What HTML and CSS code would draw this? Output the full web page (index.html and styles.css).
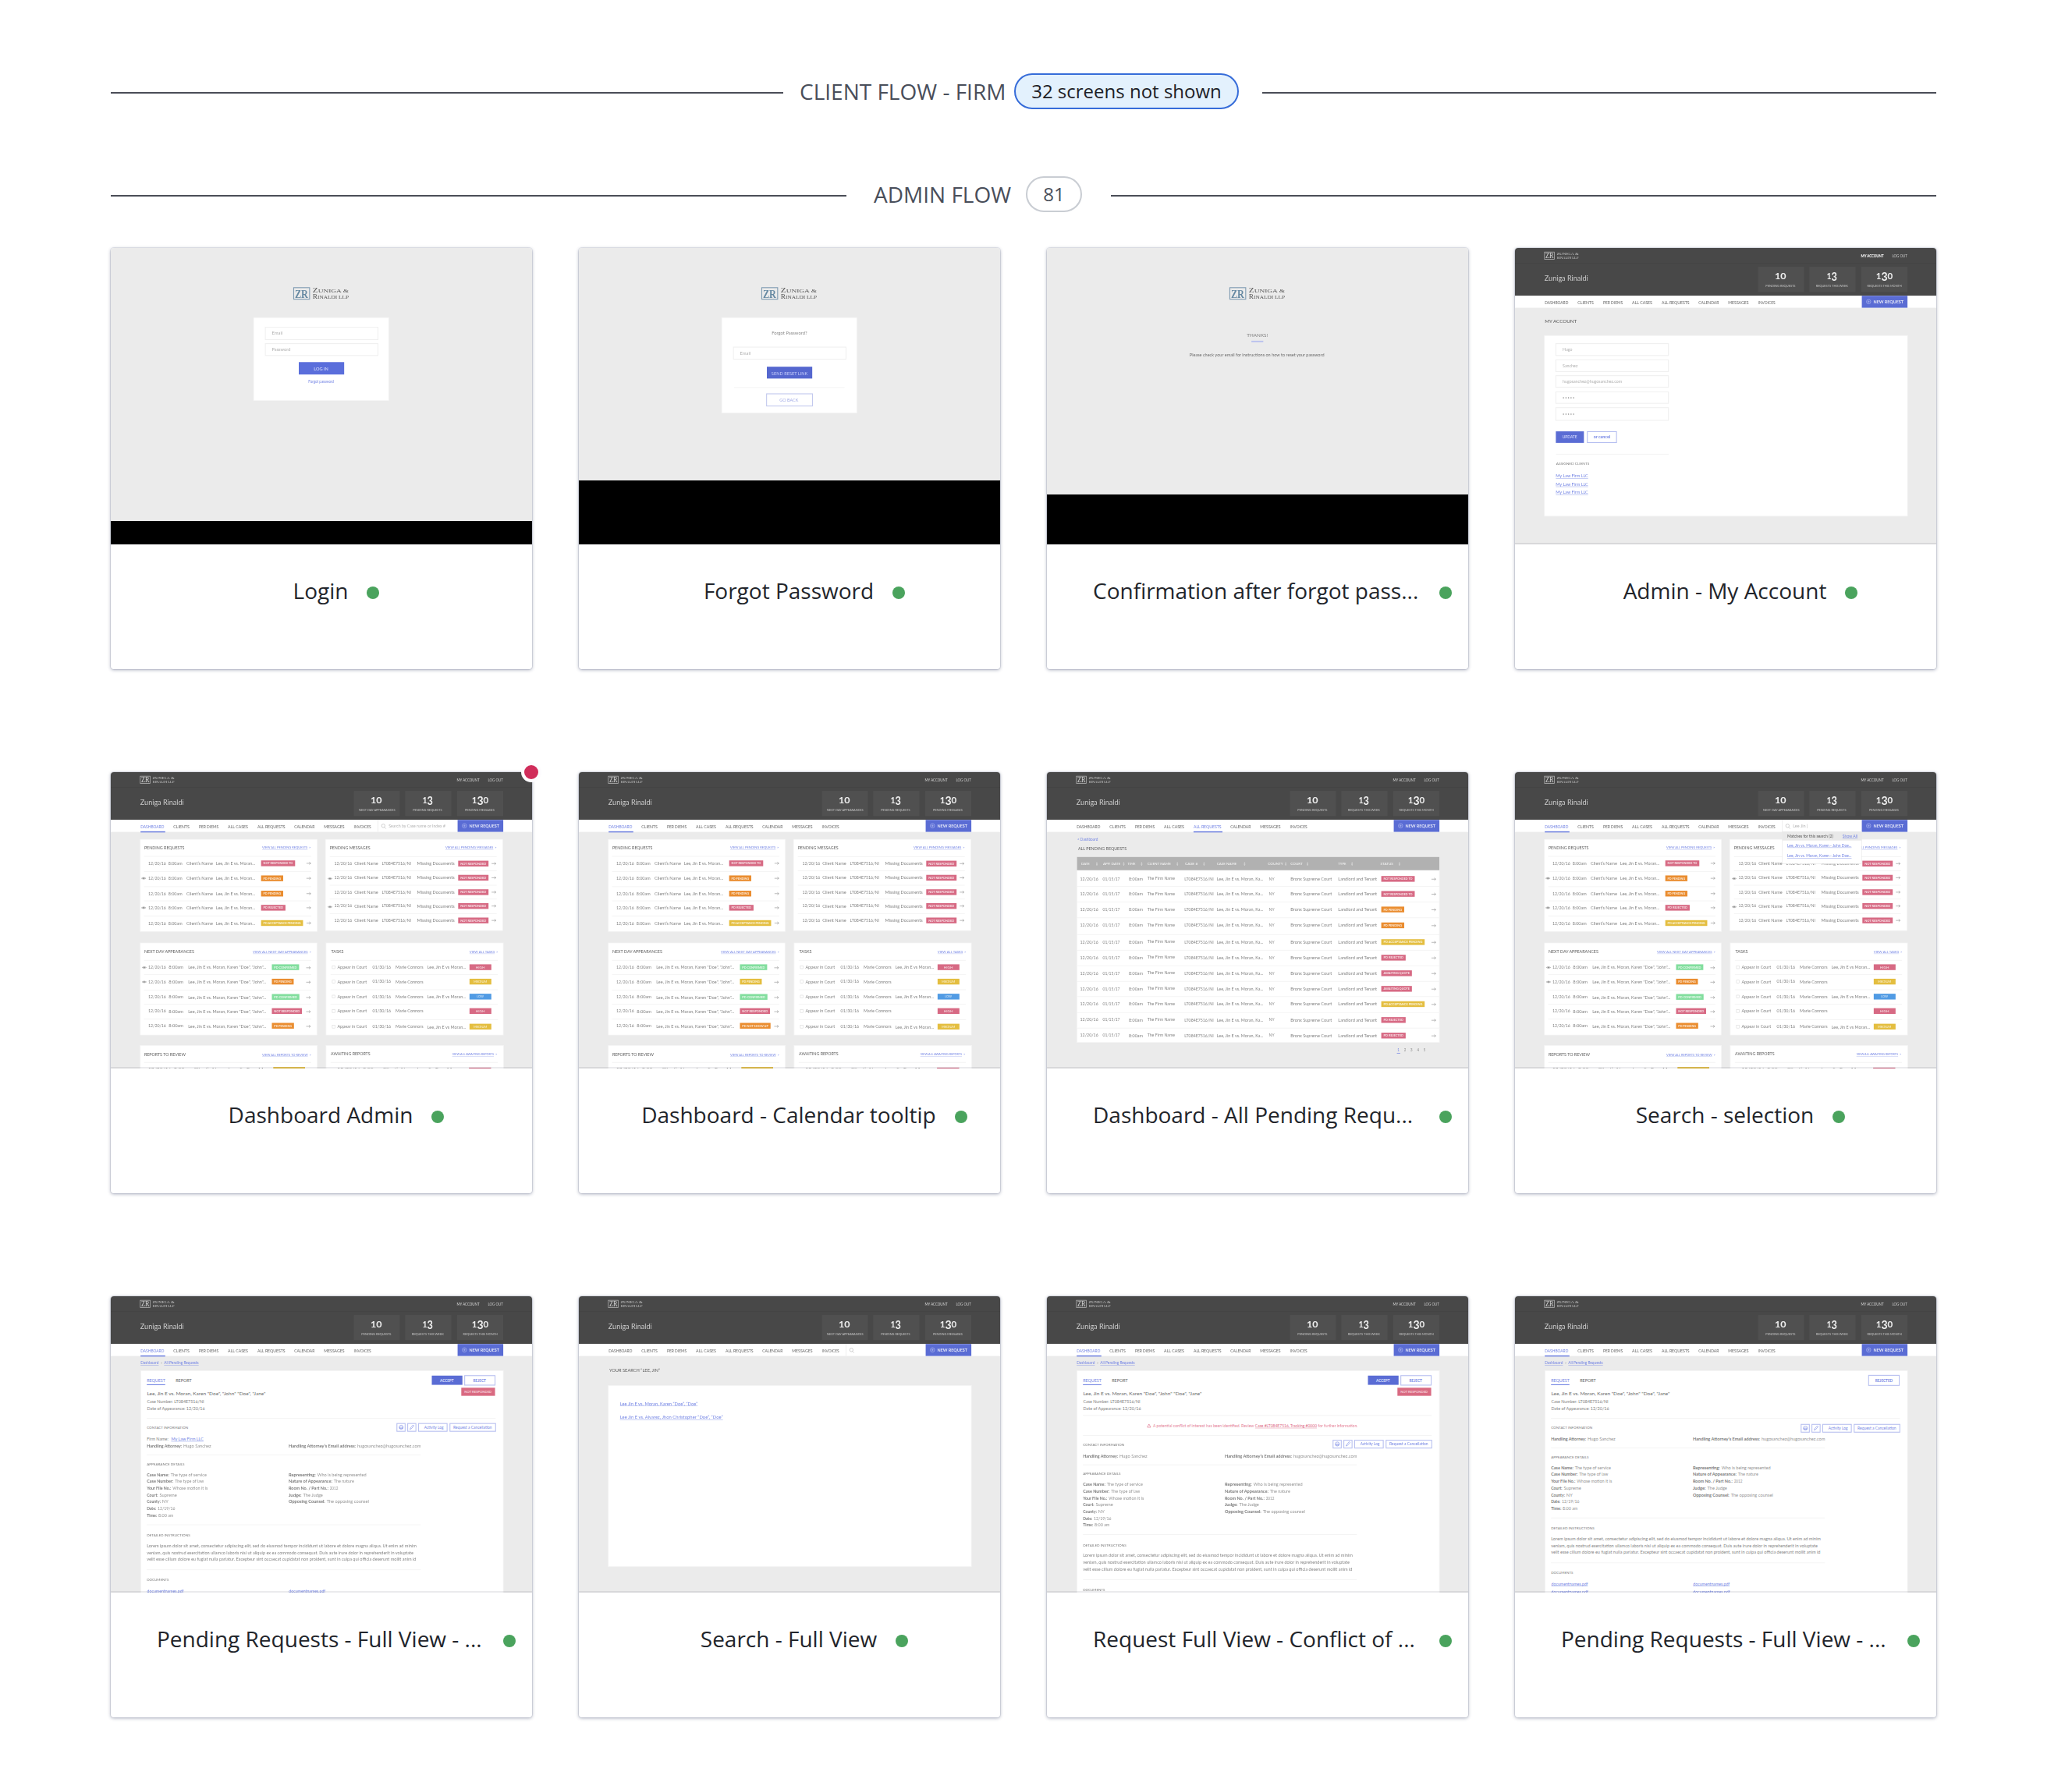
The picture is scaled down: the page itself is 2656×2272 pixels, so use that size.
FILE: index.html
```html
<!DOCTYPE html>
<html lang="en">
<head>
<meta charset="utf-8">
<title>Project screens</title>
<link rel="stylesheet" href="styles.css">
</head>
<body>
<main class="page">
  <header class="divider divider--client">
    <span class="divider__line divider__line--start"></span>
    <h2 class="divider__label">CLIENT FLOW - FIRM</h2>
    <span class="pill pill--active">32 screens not shown</span>
    <span class="divider__line"></span>
  </header>
  <header class="divider divider--admin">
    <span class="divider__line divider__line--start"></span>
    <h2 class="divider__label">ADMIN FLOW</h2>
    <span class="pill">81</span>
    <span class="divider__line"></span>
  </header>

  <section class="grid">
    <article class="card">
      <div class="thumb" data-board="login"></div>
      <div class="card__foot"><span class="card__title">Login</span><i class="dot"></i></div>
    </article>
    <article class="card">
      <div class="thumb" data-board="forgot"></div>
      <div class="card__foot"><span class="card__title">Forgot Password</span><i class="dot"></i></div>
    </article>
    <article class="card">
      <div class="thumb" data-board="thanks"></div>
      <div class="card__foot"><span class="card__title card__title--full">Confirmation after forgot pass...</span><i class="dot"></i></div>
    </article>
    <article class="card">
      <div class="thumb" data-board="account"></div>
      <div class="card__foot"><span class="card__title">Admin - My Account</span><i class="dot"></i></div>
    </article>

    <article class="card">
      <div class="thumb" data-board="dashboard"></div>
      <i class="badge"></i>
      <div class="card__foot"><span class="card__title">Dashboard Admin</span><i class="dot"></i></div>
    </article>
    <article class="card">
      <div class="thumb" data-board="calendar"></div>
      <div class="card__foot"><span class="card__title">Dashboard - Calendar tooltip</span><i class="dot"></i></div>
    </article>
    <article class="card">
      <div class="thumb" data-board="pending"></div>
      <div class="card__foot"><span class="card__title card__title--full">Dashboard - All Pending Requ...</span><i class="dot"></i></div>
    </article>
    <article class="card">
      <div class="thumb" data-board="selection"></div>
      <div class="card__foot"><span class="card__title">Search - selection</span><i class="dot"></i></div>
    </article>

    <article class="card">
      <div class="thumb" data-board="request"></div>
      <div class="card__foot"><span class="card__title card__title--full">Pending Requests - Full View - ...</span><i class="dot"></i></div>
    </article>
    <article class="card">
      <div class="thumb" data-board="results"></div>
      <div class="card__foot"><span class="card__title">Search - Full View</span><i class="dot"></i></div>
    </article>
    <article class="card">
      <div class="thumb" data-board="conflict"></div>
      <div class="card__foot"><span class="card__title card__title--full">Request Full View - Conflict of ...</span><i class="dot"></i></div>
    </article>
    <article class="card">
      <div class="thumb" data-board="rejected"></div>
      <div class="card__foot"><span class="card__title card__title--full">Pending Requests - Full View - ...</span><i class="dot"></i></div>
    </article>
  </section>
</main>
<script src="boards.js"></script>
</body>
</html>
```
FILE: styles.css
```css
* {
  box-sizing: border-box;
}

body {
  margin: 0;
  background: #fff;
  color: #22252b;
  font-family: "Open Sans", "Noto Sans", sans-serif;
}

.page {
  width: 2656px;
  height: 2272px;
  padding: 94px 174px 0 142px;
  overflow: hidden;
}

/* Section dividers */
.divider {
  display: flex;
  align-items: center;
  height: 46px;
  margin-bottom: 86px;
}

.divider--admin {
  margin-bottom: 46px;
}

.divider__line {
  flex: 1;
  height: 2px;
  margin-top: 4px;
  background: #4a4d57;
}

.divider__line--start {
  flex: none;
}

.divider--client .divider__line--start {
  width: 862px;
}

.divider--admin .divider__line--start {
  width: 943px;
}

.divider__label {
  margin: 0 0 0 21px;
  color: #494e5a;
  font-size: 28px;
  font-weight: 400;
  line-height: 46px;
  white-space: nowrap;
}

.divider--client .divider__label {
  width: 275px;
}

.divider--admin .divider__label {
  width: 195px;
  margin-left: 35px;
}

.pill {
  flex: none;
  width: 72px;
  height: 46px;
  margin-right: 37px;
  border: 2px solid #c9cdd3;
  border-radius: 23px;
  color: #494e5a;
  font-size: 24px;
  line-height: 42px;
  text-align: center;
  white-space: nowrap;
}

.pill--active {
  width: 288px;
  margin-right: 30px;
  border-color: #366cd9;
  background: #e3f1fd;
  color: #1d2026;
}

/* Screen cards */
.grid {
  display: grid;
  grid-template-columns: repeat(4, 540px);
  grid-auto-rows: 540px;
  gap: 132px 60px;
}

.card {
  position: relative;
  border-radius: 4px;
  background: #fff;
  box-shadow: 0 0 0 1px rgba(60, 65, 110, 0.1), 0 1px 4px rgba(40, 50, 90, 0.4);
}

.thumb {
  position: relative;
  height: 380px;
  overflow: hidden;
  border-radius: 4px 4px 0 0;
  background: #ebebeb;
}

.thumb::after {
  content: "";
  position: absolute;
  inset: auto 0 0;
  height: 2px;
  background: rgba(30, 30, 50, 0.09);
}

.board {
  display: block;
  width: 540px;
  height: 380px;
  font-family: Lato, "Open Sans", sans-serif;
}

.board text {
  white-space: pre;
}

.board .soft {
  filter: blur(0.5px);
}

.card__foot {
  display: flex;
  justify-content: center;
  padding: 39px 0 0 38px;
}

.card__title {
  flex: none;
  font-size: 28px;
  line-height: 40px;
  white-space: nowrap;
}

.card__title--full {
  width: 420px;
}

.dot {
  flex: none;
  width: 16px;
  height: 16px;
  margin: 15px 0 0 24px;
  border-radius: 50%;
  background: #4aa35d;
}

.badge {
  position: absolute;
  top: -13px;
  right: -12px;
  width: 26px;
  height: 26px;
  border: 4px solid #fdfcfe;
  border-radius: 50%;
  background: #d02c5a;
}
```
FILE: boards.js
```
// Screen previews, drawn as SVG on a shared coordinate board.
const BLUE = "#5a6cd4", LINK = "#7384e4", GRAY = "#848484", DARK = "#646464";
const PINK = "#d76a84", ORANGE = "#ea8d30", YELLOW = "#e4be40", GREEN = "#82de9e", SKY = "#519be4";

const rect = (x1, y1, x2, y2, fill, extra = "") =>
  `<rect x="${x1}" y="${y1}" width="${x2 - x1}" height="${y2 - y1}" fill="${fill}" ${extra}/>`;
const box = (x1, y1, x2, y2, stroke, w = 2) =>
  rect(x1, y1, x2, y2, "none", `stroke="${stroke}" stroke-width="${w}"`);
const rule = (x1, x2, y, c = "#f0f0f0") => rect(x1, y, x2, y + 2, c);

// Text from x1 to x2, vertically centred on cy.
const text = (x1, x2, cy, str, size = 15, fill = GRAY, extra = "") =>
  `<text x="${x1}" y="${(cy + size * 0.35).toFixed(1)}" textLength="${x2 - x1}" lengthAdjust="spacingAndGlyphs" font-size="${size}" fill="${fill}" ${extra}>${str}</text>`;
const link = (x1, x2, cy, str, size = 14, c = LINK) =>
  text(x1, x2, cy, str, size, c) + rect(x1, cy + 7, x2, cy + 8.5, c, 'opacity=".7"');
const tag = (x1, x2, cy, fill, str) =>
  rect(x1, cy - 10, x2, cy + 10, fill) + text(x1 + 8, x2 - 8, cy, str, 11, "#fff", 'font-weight="700" opacity=".8"');
const arrow = (x, y) =>
  `<path d="M${x - 8} ${y}h15m-5-4l5 4l-5 4" fill="none" stroke="#8a8a8a" stroke-width="1.6"/>`;
const eye = (x, y) =>
  `<path d="M${x - 8} ${y}q8-7 16 0q-8 7-16 0z" fill="#d0d0d0" stroke="#999"/><circle cx="${x}" cy="${y}" r="2.2" fill="#777"/>`;
const panel = (x1, y1, x2, y2) => rect(x1, y1, x2, y2, "#fff", 'stroke="#f4f4f4" stroke-width="2"');
const lens = (x, y) =>
  `<circle cx="${x - 1}" cy="${y - 1}" r="6" fill="none" stroke="#b0b0b0" stroke-width="1.6"/><path d="M${x + 3} ${y + 4}l5 5" stroke="#b0b0b0" stroke-width="1.8"/>`;

const STATS_A = [["10", 917, 1022, "PENDING REQUESTS"], ["13", 1094, 1207, "REQUESTS THIS WEEK"], ["130", 1275, 1397, "REQUESTS THIS MONTH"]];
const STATS_B = [["10", 908, 1036, "NEXT DAY APPEARANCES"], ["13", 1098, 1201, "PENDING REQUESTS"], ["130", 1282, 1386, "PENDING MESSAGES"]];
const NAV = [[138, 221, "DASHBOARD"], [254, 310, "CLIENTS"], [344, 413, "PER DIEMS"], [446, 517, "ALL CASES"],
  [550, 648, "ALL REQUESTS"], [680, 752, "CALENDAR"], [785, 857, "MESSAGES"], [890, 951, "INVOICES"]];

// Old-style figures: the 3 is taller and hangs below the line.
const figure = (n) => {
  const x1 = { 10: 949, 13: 1132, 130: 1306 }[n], x2 = { 10: 989, 13: 1169, 130: 1365 }[n];
  const inner = n.replace("3", '<tspan dy="6" font-size="39">3</tspan>').replace("</tspan>0", '</tspan><tspan dy="-6">0</tspan>');
  return text(x1, x2, 150, inner, 32, "#f0f0f0", 'font-weight="700"');
};

function header(stats, active, opts = {}) {
  let s = rect(30, 50, 1522, 219.5, "#484848") + rect(33, 106, 1519, 107.5, "#424242");
  s += box(137, 68, 172, 93, "#b8b8b8") + text(140, 169, 81, "ZR", 27, "#d8d8d8", 'font-family="Liberation Serif"');
  s += text(180, 257, 74, "ZUNIGA &amp;", 13, "#c8c8c8", 'font-family="Liberation Serif"');
  s += text(180, 257, 87, "RINALDI LLP", 13, "#c8c8c8", 'font-family="Liberation Serif"');
  s += text(1253, 1333, 81, "MY ACCOUNT", 13, opts.account ? "#fff" : "#dadada", opts.account ? 'font-weight="900"' : "");
  s += text(1363, 1416, 81, "LOG OUT", 13, "#cecece");
  s += text(137, 291, 158, "Zuniga Rinaldi", 27, "#cccccc");
  [[890, 1052], [1071, 1234], [1254, 1417]].forEach(([a, b], i) => {
    const [n, x1, x2, label] = stats[i];
    s += rect(a, 119, b, 206, "#505050") + figure(n) + text(x1, x2, 185, label, 11, "#c2c2c2");
  });
  s += rect(30, 219.5, 1522, 261, "#fff");
  NAV.forEach(([a, b, label], i) => {
    s += text(a, b, 243, label, 14, i === active ? LINK : DARK);
    if (i === active) s += rect(a, 259, b + 4, 263, "#6c7ee0");
  });
  s += rect(1256, 219.5, 1417, 261, BLUE) + '<circle cx="1280" cy="240" r="7.5" fill="none" stroke="#bcc5f5" stroke-width="1.6"/><path d="M1280 236v8m-4-4h8" stroke="#bcc5f5" stroke-width="1.6"/>';
  s += text(1297, 1403, 240, "NEW REQUEST", 15, "#fff", 'font-weight="700" opacity=".85"');
  if (opts.search !== undefined) {
    s += rect(975, 219.5, 976.5, 261, "#e2e2e2") + lens(995, 241);
    if (opts.search) s += text(1013, opts.searchEnd, 242, opts.search, 14, "#b5b5b5");
  }
  return s;
}

const logo = () => box(678, 186, 734, 226, "#7f9bb1", 3) + text(682, 729, 207, "ZR", 42, "#4f7896", 'font-family="Liberation Serif" font-weight="700" opacity=".85"') +
  text(745, 872, 197, "<tspan font-size=\"23\">Z</tspan>UNIGA &amp;", 19, "#555", 'font-family="Liberation Serif"') +
  text(745, 872, 217, "<tspan font-size=\"23\">R</tspan>INALDI LLP", 18, "#555", 'font-family="Liberation Serif"');
const field = (x1, y1, x2, y2, str, w) => rect(x1, y1, x2, y2, "#fff", 'stroke="#f0f0f0" stroke-width="3"') + text(601, 601 + w, (y1 + y2) / 2, str, 15, "#b0b0b0");

function login() {
  return logo() + panel(537, 290, 1013, 577) + field(578, 323, 975, 366, "Email", 38) + field(578, 380, 975, 421, "Password", 66) +
    rect(696, 444, 856, 487, "#5a6edb") + text(749, 800, 467, "LOG IN", 16, "#e2e6ff") + text(730, 820, 512, "Forgot password", 13, LINK);
}
function forgot() {
  return logo() + panel(537, 290, 1013, 620) + text(713, 838, 344, "Forgot Password?", 14, "#888") + field(578, 392, 975, 434, "Email", 38) +
    rect(696, 460, 856, 501, "#5567cf") + text(712, 840, 482, "SEND RESET LINK", 17, "#c3cbfa") + rule(580, 970, 531) +
    box(695, 554, 857, 596, "#c3c9ee", 3) + text(741, 807, 576, "GO BACK", 14, "#a2abe6");
}
function thanks() {
  return logo() + text(738, 812, 350, "THANKS!", 17, "#808080") + rect(754, 370, 796, 375, "#b9c1ee") +
    text(536, 1011, 420, "Please check your email for instructions on how to reset your password", 15, "#6c6c6c");
}
function account() {
  let s = text(138, 251, 301, "MY ACCOUNT", 17, "#555") + panel(137, 352, 1417, 978);
  [[380, 421, "Hugo", 235], [436, 477, "Sanchez", 254], [491, 531, "hugosanchez@hugosanchez.com", 410], [547, 587, "• • • • •", 243], [602, 646, "• • • • •", 243]]
    .forEach(([a, b, v, e]) => { s += box(177, a, 574, b, "#f0f0f0", 3) + text(201, e, (a + b) / 2, v, 14, "#b0b0b0"); });
  s += rect(177, 684, 276, 724, BLUE) + text(200, 252, 704, "UPDATE", 15, "#dfe3ff") + box(288, 685, 391, 723, "#b4bdf0", 3) + text(310, 369, 704, "or cancel", 14, LINK, 'font-weight="700"');
  s += rule(178, 575, 762) + text(178, 295, 797, "ASSIGNED CLIENTS", 12, "#7c7c7c");
  [839, 868, 896].forEach(y => { s += link(177, 291, y, "My Law Firm LLC", 15); });
  return s;
}

function dashboard({ open = false, eyes = true } = {}) {
  let s = panel(137, 287, 761, 606) + panel(790, 287, 1415, 603) + panel(137, 646, 760, 965) + panel(792, 646, 1417, 965) +
    panel(137, 1001, 761, 1100) + panel(792, 1001, 1418, 1100);
  const head = (x1, x2, a, b, y, t, l) => text(x1, x2, y, t, 15, "#5e5e5e") + text(a, b - 12, y + 1, l, 12, LINK) + rect(a, y + 7, b - 12, y + 8, LINK, 'opacity=".7"') + text(b - 7, b, y + 1, "&gt;", 12, LINK);
  s += head(151, 293, 567, 739, 315, "PENDING REQUESTS", "VIEW ALL PENDING REQUESTS");
  s += head(805, 948, 1213, 1394, 315, "PENDING MESSAGES", "VIEW ALL PENDING MESSAGES");
  s += head(151, 327, 534, 740, 676, "NEXT DAY APPEARANCES", "VIEW ALL NEXT DAY APPEARANCES");
  s += head(810, 854, 1298, 1399, 676, "TASKS", "VIEW ALL TASKS");
  s += head(151, 297, 567, 740, 1032, "REPORTS TO REVIEW", "VIEW ALL REPORTS TO REVIEW");
  s += head(809, 948, 1237, 1396, 1031, "AWAITING REPORTS", "VIEW ALL AWAITING REPORTS");
  [[370, 683, PINK, "NOT RESPONDED TO"], [422, 641, ORANGE, "PD PENDING"], [475, 641, ORANGE, "PD PENDING"], [524, 649, PINK, "PD REJECTED"], [577, 711, YELLOW, "PD ACCEPTANCE PENDING"]].forEach(([y, e, c, l], i) => {
    s += rule(150, 740, y - 25) + (eyes && i % 2 ? eye(149, y) : "") + text(165, 228, y + 1, "12/20/16", 13) + text(236, 285, y + 1, "8:00am", 14) +
      text(300, 393, y + 1, "Client’s Name", 15) + text(404, 542, y + 1, "Lee, Jin E vs. Moran...", 15) + tag(563, e, y, c, l) + arrow(731, y);
  });
  [371, 420, 470, 518, 568].forEach((y, i) => {
    s += rule(805, 1394, y - 25) + (eyes && i % 2 ? eye(806, y + 3) : "") + text(821, 884, y, "12/20/16", 13) + text(892, 976, y, "Client Name", 15) +
      text(989, 1092, y, "LT084E7516/NI", 14) + text(1113, 1245, y, "Missing Documents", 15) + tag(1258, 1365, y, PINK, "NOT RESPONDED") + arrow(1384, y);
  });
  const days = [[730, 697, GREEN, "PD CONFIRMED"], [780, 678, ORANGE, "PD PENDING"], [833, 698, GREEN, "PD CONFIRMED"], [882, 707, PINK, "NOT RESPONDED"], [933, 679, ORANGE, "PD PENDING"]];
  if (!eyes) {
    days[1] = [780, 678, YELLOW, "PD PENDING"];
    days[4] = [933, 709, ORANGE, "PD NOT SHOW UP"];
  }
  days.forEach(([y, e, c, l], i) => {
    s += rule(150, 740, y - 25) + (eyes && i < 2 ? eye(151, y + 1) : "") + text(165, 228, y + 1, "12/20/16", 13) + text(237, 289, y + 1, "8:00am", 14) +
      text(306, 581, y + 1, "Lee, Jin E vs. Moran, Karen \"Doe\", \"John\"...", 15) + tag(601, e, y, c, l) + arrow(730, y + 2);
  });
  [[730, PINK, "HIGH"], [780, YELLOW, "MEDIUM"], [832, SKY, "LOW"], [882, PINK, "HIGH"], [936, YELLOW, "MEDIUM"]].forEach(([y, c, l], i) => {
    s += rule(808, 1398, y - 25) + box(814, y - 5, 824, y + 5, "#d6d6d6", 1.5) + text(832, 936, y, "Appear in Court", 15) + text(956, 1021, y, "01/30/16", 14) +
      text(1037, 1135, y, "Marie Connors", 15) + (i % 2 ? "" : text(1149, 1285, y + 1, "Lee, Jin E vs Moran...", 15)) + rect(1298, y - 10, 1375, y + 10, c) +
      text(1336 - l.length * 4, 1336 + l.length * 4, y, l, 11, "#fff", 'opacity=".8"');
  });
  s += rule(150, 740, 1059) + rule(808, 1398, 1059) + text(165, 620, 1083, "12/20/16  8:00am  Client’s Name  Lee, Jin E vs. Moran...", 14) + rect(606, 1076, 718, 1090, YELLOW) +
    text(832, 1285, 1083, "12/20/16  8:00am  Client’s Name  Lee, Jin E vs. Moran...", 14) + rect(1296, 1078, 1374, 1090, PINK);
  if (open) {
    s += rect(976, 261, 1255, 371, "#fff", 'stroke="#e2e2e2" stroke-width="1.5"') + rect(976, 261, 1255, 291, "#e9e9e9") +
      text(993, 1155, 276, "Matches for this search (2)", 14, "#555") + link(1188, 1241, 276, "Show All", 14) +
      link(993, 1220, 308, "Lee, Jin vs. Moran, Karen - John Doe...", 14) + link(993, 1220, 345, "Lee, Jin vs. Moran, Karen - John Doe...", 14);
  }
  return s;
}

function pending() {
  let s = text(140, 213, 286, "&lt; Dashboard", 13, LINK) + text(143, 314, 319, "ALL PENDING REQUESTS", 14, "#5e5e5e") + panel(139, 349, 1417, 991) + rect(139, 348, 1417, 394, "#b1b1b1");
  [[154, 184, "DATE", 209], [231, 292, "APP. DATE", 304], [318, 345, "TIME", 367], [387, 470, "CLIENT NAME", 493], [520, 565, "CASE #", 587], [632, 702, "CASE NAME", 730], [812, 866, "COUNTY", 875], [892, 935, "COURT", 952], [1060, 1088, "TYPE", 1109], [1209, 1254, "STATUS", 1276]]
    .forEach(([a, b, l, c]) => { s += text(a, b, 372, l, 12, "#f8f8f8") + `<path d="M${c - 3} 371l3-4l3 4zm0 3l3 4l3-4z" fill="#f0f0f0"/>`; });
  const P = [PINK, 1330, "NOT RESPONDED TO"], O = [ORANGE, 1293, "PD PENDING"], Y = [YELLOW, 1365, "PD ACCEPTANCE PENDING"], R = [PINK, 1298, "PD REJECTED"], A = [PINK, 1320, "AWAITING QUOTE"];
  [[424, P], [476, P], [530, O], [585, O], [643, Y], [697, R], [751, A], [805, A], [858, Y], [913, R], [967, R]].forEach(([y, [c, e, l]], i) => {
    if (i) s += rule(139, 1417, y - 27);
    s += text(150, 214, y, "12/20/16", 13) + text(230, 290, y, "01/15/17", 13) + text(322, 371, y, "8:00am", 14) + text(387, 484, y - 1, "The Firm Name", 15) +
      text(518, 621, y, "LT084E7516/NI", 14) + text(632, 796, y, "Lee, Jin E vs. Moran, Ka...", 15) + text(816, 835, y, "NY", 13) + text(892, 1038, y, "Bronx Supreme Court", 15) +
      text(1060, 1197, y, "Landlord and Tenant", 15) + tag(1212, e, y, c, l) + arrow(1397, y + 1);
  });
  ["1", "2", "3", "4", "5"].forEach((n, i) => { s += text(1269 + i * 23, 1276 + i * 23, 1017, n, 13, i ? "#888" : LINK); });
  return s + rect(1267, 1027, 1279, 1029, LINK);
}

// Request detail; c and d move the stacked sections.
function request(kind) {
  const firm = kind === "request", conflict = kind === "conflict", rejected = kind === "rejected";
  const c = conflict ? 58 : 0, d = firm ? 0 : conflict ? 34 : -24;
  let s = link(138, 202, 277, "Dashboard", 13) + text(209, 215, 277, "&gt;", 12) + link(221, 343, 277, "All Pending Requests", 13) + panel(139, 304, 1417, 1100);
  s += text(160, 225, 337, "REQUEST", 15, LINK) + rect(160, 351, 225, 354, LINK) + text(262, 318, 337, "REPORT", 15, DARK);
  if (!rejected) s += rect(1165, 321, 1273, 353, BLUE) + text(1194, 1242, 338, "ACCEPT", 13, "#dfe3ff", 'font-weight="700"') + box(1281, 321, 1388, 354, "#b8c0f0", 3) + text(1311, 1356, 338, "REJECT", 13, LINK, 'font-weight="700"') + rect(1269, 363, 1388, 391, "#d96a82") + text(1280, 1376, 377, "NOT RESPONDED", 12, "#f6d0d8", 'font-weight="700"');
  else s += box(1280, 320, 1388, 355, "#b8c0f0", 3) + text(1303, 1365, 338, "REJECTED", 13, LINK, 'font-weight="700"');
  s += text(161, 579, 384, "Lee, Jin E vs. Moran, Karen \"Doe\", \"John\" \"Doe\", \"Jane\"", 17, "#6c6c6c") + text(161, 362, 411, "Case Number: LT084E7516/NI", 15) + text(161, 365, 436, "Date of Appearance: 12/20/16", 15) + rule(160, 1390, conflict ? 458 : 468);
  if (conflict) {
    s += '<path d="M393 489l6 11h-12z" fill="none" stroke="#e0708a" stroke-width="1.8"/>' + text(407, 763, 495, "A potential conflict of interest has been identified. Review", 14, "#e58399") +
      link(767, 985, 495, "Case #LT084E7516, Tracking #0000", 14, "#dd6a85") + text(989, 1129, 495, "for further information.", 14, "#e58399") + rule(160, 1390, 527);
  }
  const by = 500 + (conflict ? 58 : rejected ? 3 : 0);
  s += text(160, 306, 502 + c, "CONTACT INFORMATION", 12, "#7a7a7a");
  [[1042, 1071], [1080, 1109], [1118, 1219], [1229, 1390]].forEach(([a, b]) => { s += box(a, by - 13, b, by + 14, "#b8c0f0", 3); });
  s += `<circle cx="1057" cy="${by}" r="7" fill="none" stroke="${LINK}" stroke-width="1.6"/><path d="M1052 ${by}h10v4h-10zM1088 ${by + 7}l2-5l9-10l3 3l-9 10z" fill="none" stroke="${LINK}" stroke-width="1.6"/>`;
  s += text(1138, 1206, by, "Activity Log", 13, LINK) + text(1241, 1377, by, "Request a Cancellation", 13, LINK);
  if (firm) s += text(160, 236, 541, "Firm Name:", 15) + link(246, 360, 541, "My Law Firm LLC", 15);
  const pair = (x1, x2, x3, y, a, b) => text(x1, x2, y, a, 15, "#787878", 'font-weight="700"') + text(x2 + 5, x3, y, b, 15, "#929292");
  const hy = 566 + d;
  s += pair(160, 284, 387, hy, "Handling Attorney:", "Hugo Sanchez") + pair(660, 897, 1126, hy, "Handling Attorney’s Email address:", "hugosanchez@hugosanchez.com") + rule(160, 1126, hy + 29);
  s += text(160, 293, 627 + d, "APPEARANCE DETAILS", 12, "#7a7a7a");
  [[239, 371, "Case Name:", "The type of service"], [254, 361, "Case Number:", "The type of law"], [246, 375, "Your File No.:", "Whose motion it is"], [200, 266, "Court:", "Supreme"], [209, 236, "County:", "NY"], [193, 260, "Date:", "12/19/16"], [196, 254, "Time:", "8:00 am"]]
    .forEach(([m, e, a, b], i) => { s += pair(160, m, e, 664 + d + i * 23.5, a, b); });
  [[756, 934, "Representing:", "Who is being represented"], [814, 891, "Nature of Appearance:", "The nature"], [800, 835, "Room No. / Part No.:", "2012"], [706, 781, "Judge:", "The Judge"], [789, 943, "Opposing Counsel:", "The opposing counsel"]]
    .forEach(([m, e, a, b], i) => { s += pair(660, m, e, 664 + d + i * 23.5, a, b); });
  s += rule(160, 1126, 837 + d) + text(160, 313, 875 + d, "DETAILED INSTRUCTIONS", 12, "#7a7a7a");
  s += text(160, 1111, 910 + d, "Lorem ipsum dolor sit amet, consectetur adipiscing elit, sed do eiusmod tempor incididunt ut labore et dolore magna aliqua. Ut enim ad minim", 15) +
    text(160, 1100, 934 + d, "veniam, quis nostrud exercitation ullamco laboris nisi ut aliquip ex ea commodo consequat. Duis aute irure dolor in reprehenderit in voluptate", 15) +
    text(160, 1110, 957 + d, "velit esse cillum dolore eu fugiat nulla pariatur. Excepteur sint occaecat cupidatat non proident, sunt in culpa qui officia deserunt mollit anim id", 15);
  s += rule(160, 1126, 993 + d) + text(160, 238, 1029 + d, "DOCUMENTS", 12, "#7a7a7a");
  if (!conflict) s += link(161, 290, 1067 + d, "documentnames.pdf", 15) + link(661, 790, 1067 + d, "documentnames.pdf", 15);
  if (rejected) s += link(161, 291, 1070, "documentnames.pdf", 15) + link(661, 791, 1070, "documentnames.pdf", 15);
  return s;
}

const results = () => text(140, 319, 304, "YOUR SEARCH “LEE, JIN”", 15, "#5e5e5e") + panel(137, 355, 1417, 983) +
  link(178, 452, 418, "Lee Jin E vs. Moran, Karen “Doe”, “Doe”", 16) + link(178, 541, 466, "Lee Jin E vs. Alvarez, Jhon Christopher “Doe”, “Doe”", 16);

const HINT = { search: "Search by Case name or Index #", searchEnd: 1213 };
// Each board: top offset of its coordinates, header, body.
const BOARDS = {
  login: [48.65, "", login(), 994.7],
  forgot: [48.65, "", forgot(), 854.1],
  thanks: [48.65, "", thanks(), 902.8],
  account: [48.65, header(STATS_A, -1, { account: true }), account()],
  dashboard: [54, header(STATS_B, 0, HINT), dashboard()],
  calendar: [54, header(STATS_B, 0), dashboard({ eyes: false })],
  pending: [54, header(STATS_A, 4), pending()],
  selection: [54, header(STATS_B, 0, { search: "Lee Jin |", searchEnd: 1066 }), dashboard({ open: true })],
  request: [45.95, header(STATS_A, 0), request("request")],
  results: [45.95, header(STATS_B, -1, { search: "" }), results()],
  conflict: [45.95, header(STATS_A, 0), request("conflict")],
  rejected: [45.95, header(STATS_A, 0), request("rejected")],
};

document.querySelectorAll(".thumb").forEach((el) => {
  const [top, head, body, letterbox] = BOARDS[el.dataset.board];
  el.innerHTML = `<svg class="board" viewBox="33 ${top} 1485.5 1027.1" preserveAspectRatio="none"><g class="soft">` +
    `<g transform="translate(0 ${top - 54})">${head}</g>${body}</g>${letterbox ? rect(33, letterbox, 1519, 1080, "#000") : ""}</svg>`;
});
```
